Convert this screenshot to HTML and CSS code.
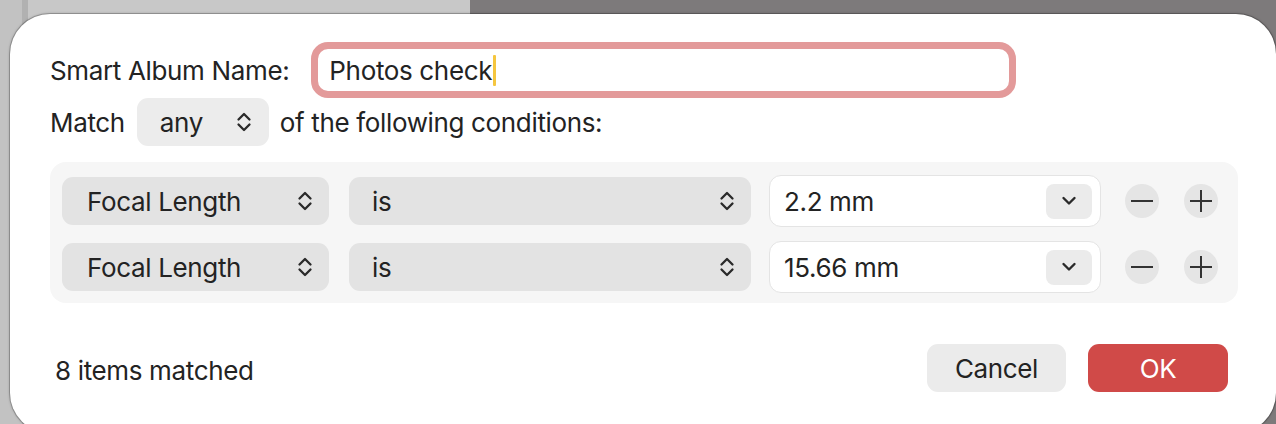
FILE: index.html
```html
<!DOCTYPE html>
<html>
<head>
<meta charset="utf-8">
<link rel="stylesheet" href="styles.css">
</head>
<body>
<div class="desktop">
  <div class="dialog">
    <div class="name-row">
      <span class="label">Smart Album Name:</span>
      <div class="name-field"><span class="name-text">Photos check</span><span class="caret"></span></div>
    </div>
    <div class="match-row">
      <span class="label">Match</span>
      <div class="popup popup-any">
        <span>any</span>
        <svg class="updown" width="16" height="22" viewBox="0 0 16 22"><path d="M2.5 8.5 L8 3 L13.5 8.5 M2.5 13.5 L8 19 L13.5 13.5" fill="none" stroke="#2a2a2a" stroke-width="2.3" stroke-linecap="round" stroke-linejoin="round"/></svg>
      </div>
      <span class="label">of the following conditions:</span>
    </div>
    <div class="conditions">
      <div class="cond-row">
        <div class="popup popup-field"><span>Focal Length</span><svg class="updown" width="16" height="22" viewBox="0 0 16 22"><path d="M2.5 8.5 L8 3 L13.5 8.5 M2.5 13.5 L8 19 L13.5 13.5" fill="none" stroke="#2a2a2a" stroke-width="2.3" stroke-linecap="round" stroke-linejoin="round"/></svg></div>
        <div class="popup popup-op"><span>is</span><svg class="updown" width="16" height="22" viewBox="0 0 16 22"><path d="M2.5 8.5 L8 3 L13.5 8.5 M2.5 13.5 L8 19 L13.5 13.5" fill="none" stroke="#2a2a2a" stroke-width="2.3" stroke-linecap="round" stroke-linejoin="round"/></svg></div>
        <div class="combo"><span>2.2 mm</span><div class="combo-btn"><svg width="16" height="12" viewBox="0 0 16 12"><path d="M2.5 3 L8 8.5 L13.5 3" fill="none" stroke="#2a2a2a" stroke-width="2.4" stroke-linecap="round" stroke-linejoin="round"/></svg></div></div>
        <div class="round-btn"><svg width="22" height="22" viewBox="0 0 22 22"><path d="M0 11 H22" stroke="#333" stroke-width="2"/></svg></div>
        <div class="round-btn"><svg width="22" height="22" viewBox="0 0 22 22"><path d="M0 11 H22 M11 0 V22" stroke="#333" stroke-width="2"/></svg></div>
      </div>
      <div class="cond-row">
        <div class="popup popup-field"><span>Focal Length</span><svg class="updown" width="16" height="22" viewBox="0 0 16 22"><path d="M2.5 8.5 L8 3 L13.5 8.5 M2.5 13.5 L8 19 L13.5 13.5" fill="none" stroke="#2a2a2a" stroke-width="2.3" stroke-linecap="round" stroke-linejoin="round"/></svg></div>
        <div class="popup popup-op"><span>is</span><svg class="updown" width="16" height="22" viewBox="0 0 16 22"><path d="M2.5 8.5 L8 3 L13.5 8.5 M2.5 13.5 L8 19 L13.5 13.5" fill="none" stroke="#2a2a2a" stroke-width="2.3" stroke-linecap="round" stroke-linejoin="round"/></svg></div>
        <div class="combo"><span>15.66 mm</span><div class="combo-btn"><svg width="16" height="12" viewBox="0 0 16 12"><path d="M2.5 3 L8 8.5 L13.5 3" fill="none" stroke="#2a2a2a" stroke-width="2.4" stroke-linecap="round" stroke-linejoin="round"/></svg></div></div>
        <div class="round-btn"><svg width="22" height="22" viewBox="0 0 22 22"><path d="M0 11 H22" stroke="#333" stroke-width="2"/></svg></div>
        <div class="round-btn"><svg width="22" height="22" viewBox="0 0 22 22"><path d="M0 11 H22 M11 0 V22" stroke="#333" stroke-width="2"/></svg></div>
      </div>
    </div>
    <div class="footer">
      <span class="status">8 items matched</span>
      <div class="buttons">
        <div class="btn btn-cancel">Cancel</div>
        <div class="btn btn-ok">OK</div>
      </div>
    </div>
  </div>
</div>
</body>
</html>
```

FILE: styles.css
```css
html, body {
  margin: 0;
  padding: 0;
}
body {
  width: 1276px;
  height: 424px;
  overflow: hidden;
  font-family: "Inter", "Noto Sans", sans-serif;
  color: #232323;
}
.desktop {
  width: 1276px;
  height: 424px;
  overflow: hidden;
  background: linear-gradient(to right, #c2c2c2 0 22px, #b1b1b1 22px 28px, #c8c8c8 28px 470px, #7d7a7b 470px);
  padding-top: 14px;
  padding-left: 10px;
  box-sizing: border-box;
}
.dialog {
  width: 1266px;
  height: 419px;
  background: #ffffff;
  border-radius: 40px;
  box-shadow: 0 0 0 1px rgba(0,0,0,0.18), 0 0 3px rgba(0,0,0,0.35);
  box-sizing: border-box;
  padding: 28px 0 0 40px;
}
.label {
  font-size: 26px;
  letter-spacing: -0.35px;
  white-space: nowrap;
}
.name-row {
  display: flex;
  align-items: center;
  gap: 22px;
  height: 56px;
}
.name-field {
  width: 680px;
  height: 42px;
  border: 7px solid #e39a9a;
  border-radius: 17px;
  display: flex;
  align-items: center;
  padding-left: 11px;
  box-sizing: content-box;
}
.name-text {
  font-size: 26px;
  letter-spacing: -0.35px;
}
.caret {
  width: 3px;
  height: 31px;
  background: #f5c63f;
  margin-left: 1px;
  border-radius: 1px;
}
.match-row {
  display: flex;
  align-items: center;
  height: 48px;
}
.match-row .label:first-child {
  margin-right: 12px;
}
.popup {
  display: flex;
  align-items: center;
  justify-content: space-between;
  height: 48px;
  border-radius: 11px;
  box-sizing: border-box;
  font-size: 26px;
  letter-spacing: -0.35px;
  flex-shrink: 0;
}
.popup-any {
  width: 132px;
  background: #ececec;
  padding: 0 17px 0 23px;
  margin-right: 11px;
}
.conditions {
  margin-top: 16px;
  width: 1188px;
  height: 141px;
  background: #f6f6f6;
  border-radius: 16px;
  box-sizing: border-box;
  padding: 13px 0 0 12px;
  display: flex;
  flex-direction: column;
  gap: 14px;
}
.cond-row {
  display: flex;
  align-items: center;
  height: 52px;
}
.popup-field {
  width: 267px;
  background: #e3e3e3;
  padding: 0 16px 0 25px;
  margin-right: 20px;
}
.popup-op {
  width: 402px;
  background: #e3e3e3;
  padding: 0 16px 0 23px;
  margin-right: 18px;
}
.combo {
  width: 332px;
  height: 52px;
  flex-shrink: 0;
  box-sizing: border-box;
  background: #fff;
  border: 1.5px solid #e4e4e4;
  border-radius: 12px;
  display: flex;
  align-items: center;
  justify-content: space-between;
  padding: 0 8px 0 14px;
  font-size: 26px;
  letter-spacing: -0.35px;
  margin-right: 24px;
}
.combo-btn {
  width: 46px;
  height: 35px;
  background: #ebebeb;
  border-radius: 8px;
  display: flex;
  align-items: center;
  justify-content: center;
}
.round-btn {
  width: 34px;
  height: 34px;
  flex-shrink: 0;
  border-radius: 50%;
  background: #e5e5e5;
  display: flex;
  align-items: center;
  justify-content: center;
  margin-right: 25px;
}
.round-btn:last-child {
  margin-right: 0;
}
.footer {
  display: flex;
  align-items: center;
  justify-content: space-between;
  margin-top: 41px;
  padding-left: 5px;
  padding-right: 48px;
  height: 48px;
}
.status {
  font-size: 26px;
  letter-spacing: -0.35px;
  margin-top: 4px;
}
.buttons {
  display: flex;
  gap: 22px;
}
.btn {
  height: 48px;
  width: 139px;
  border-radius: 11px;
  display: flex;
  align-items: center;
  justify-content: center;
  font-size: 26px;
  letter-spacing: -0.35px;
}
.btn-cancel {
  background: #ebebeb;
  color: #232323;
}
.btn-ok {
  width: 140px;
  background: #d04a48;
  color: #ffffff;
}
```
